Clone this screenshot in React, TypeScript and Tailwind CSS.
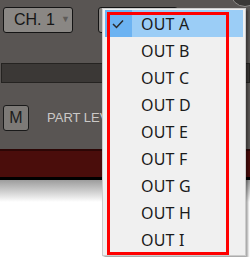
const outs = ['A', 'B', 'C', 'D', 'E', 'F', 'G', 'H', 'I'];

const App = () => {
  return (
    <div className="relative w-[250px] h-[257px] overflow-hidden bg-white font-['Liberation_Sans',Arial,sans-serif]">
      <div className="h-[180px] bg-[#595553] flex flex-col">
        <div className="h-[63px] flex items-start pt-[7px] pl-[3px]">
          <div className="shrink-0 w-[70px] h-[26px] rounded-[3px] border-[1.5px] border-[#141414] bg-[#8a8784] flex items-center pl-[10px] text-[16px] text-[#161616] whitespace-nowrap">
            CH. 1
            <span className="ml-[6px] text-[9px] text-[#5e5b58]">▼</span>
          </div>
          <div className="shrink-0 ml-[25px] w-[80px] h-[26px] rounded-[3px] border-[1.5px] border-[#141414] bg-[#8a8784]"></div>
          <div className="shrink-0 ml-[52px] -mt-[30px] w-[30px] h-[30px] rounded-full bg-[#3a3836] border border-[#8d8a87]"></div>
        </div>
        <div className="ml-[1px] h-[20px] bg-[#3b3836] border border-[#252321]"></div>
        <div className="mt-[22px] h-[26px] flex items-center pl-[3px]">
          <div className="shrink-0 w-[26px] h-[26px] rounded-[3px] border-[1.5px] border-[#1a1a1a] bg-[#7d7a77] flex items-center justify-center text-[16px] text-[#1c1c1c]">
            M
          </div>
          <span className="ml-[18px] text-[13px] text-[#cbc9c7] whitespace-nowrap">PART LEVEL</span>
        </div>
        <div className="mt-[18px] h-[28px] bg-[#4a0d0b] border-t-2 border-[#2c0605]"></div>
        <div className="h-[3px] bg-black"></div>
      </div>
      <div className="h-[22px] bg-gradient-to-b from-[#9d9d9d] to-white"></div>

      <div className="absolute left-[102px] top-[8px] w-[144px] h-[248px] bg-[#f0f0f0] border border-[#cccccc] py-[1px] px-[2px] shadow-[2px_2px_2px_rgba(0,0,0,0.35)] font-['Noto_Sans','Open_Sans',sans-serif]">
        {outs.map((o, i) => (
          <div key={o} className={`h-[27px] flex items-center ${i === 0 ? 'bg-[#9bcdf6]' : ''}`}>
            <div className={`w-[27px] h-full flex items-center justify-center ${i === 0 ? 'bg-[#6cb3f2]' : ''}`}>
              {i === 0 && (
                <svg width="12" height="10" viewBox="0 0 12 10" className="ml-[-2px]">
                  <polyline points="1,5 4.5,8.5 11,1.5" fill="none" stroke="#2a2a2a" strokeWidth="1.5" />
                </svg>
              )}
            </div>
            <span className="ml-[9px] text-[16px] tracking-[0.2px] text-[#1b1b1b]">OUT {o}</span>
          </div>
        ))}
      </div>

      <div className="absolute left-[107px] top-[12px] w-[122px] h-[243px] border-[3px] border-[#ff0000]"></div>
    </div>
  );
};

export default App;
